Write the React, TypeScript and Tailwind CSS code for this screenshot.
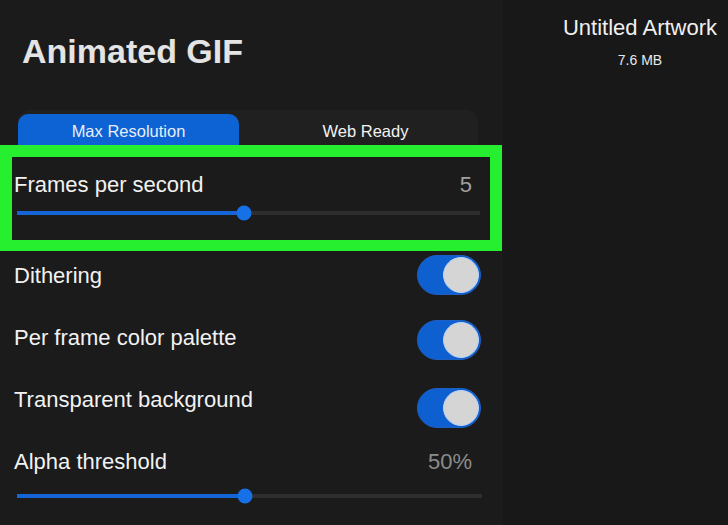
import React, { useState } from "react";

const font = { fontFamily: '"Liberation Sans", Arial, sans-serif' };

function Toggle({ on, onChange, className }: { on: boolean; onChange: () => void; className?: string }) {
    return (
        <button
            onClick={onChange}
            className={`flex h-[40px] w-[64px] items-center rounded-full border border-[#1d5fc4] px-[1px] ${on ? "justify-end bg-[#0e5fd0]" : "justify-start bg-[#3a3a3a]"} ${className ?? ""}`}
        >
            <span className="h-[36px] w-[36px] rounded-full border border-[#b9d3fb] bg-[#d5d5d5]" />
        </button>
    );
}

function Slider({ value, className }: { value: number; className?: string }) {
    return (
        <div className={`relative h-[4px] bg-[#2e2e2e] ${className ?? ""}`}>
            <div className="h-full bg-[#1565d6]" style={{ width: `${value}%` }} />
            <div
                className="absolute top-1/2 h-[15px] w-[15px] -translate-x-1/2 -translate-y-1/2 rounded-full bg-[#1670e6]"
                style={{ left: `${value}%` }}
            />
        </div>
    );
}

export default function App() {
    const [tab, setTab] = useState("max");
    const [dither, setDither] = useState(true);
    const [palette, setPalette] = useState(true);
    const [transparent, setTransparent] = useState(true);

    return (
        <div className="flex h-[525px] w-[728px] overflow-hidden bg-[#1a1a1a] text-[#f2f2f2]" style={font}>
            <div className="flex w-[503px] flex-col bg-[#1b1b1b]">
                <div className="h-[110px] pl-[22px] pt-[31px]">
                    <h1 className="text-[34px] font-bold leading-[40px] text-[#e4e4e4]">Animated GIF</h1>
                </div>

                <div className="ml-[18px] flex h-[35px] w-[460px] rounded-t-[12px] bg-[#202020]">
                    <button
                        onClick={() => setTab("max")}
                        className={`mt-[4px] flex w-[221px] items-center justify-center rounded-t-[10px] pt-[3px] text-[16.5px] ${tab === "max" ? "bg-[#0d63d3] text-[#e8eef8]" : "text-[#f0f0f0]"}`}
                    >
                        Max Resolution
                    </button>
                    <button
                        onClick={() => setTab("web")}
                        className={`mt-[4px] flex flex-1 items-center justify-center rounded-t-[10px] pl-[14px] pt-[3px] text-[16.5px] ${tab === "web" ? "bg-[#0d63d3]" : ""}`}
                    >
                        Web Ready
                    </button>
                </div>

                <div className="relative z-10 h-[106px] w-[502px] border-[12px] border-b-[11px] border-[#26ef2f] bg-[#1b1b1b] pt-[16px]">
                    <div className="flex items-center justify-between pl-[2px] pr-[18px] text-[22px] leading-[24px]">
                        <span>Frames per second</span>
                        <span className="text-[#a0a0a0]">5</span>
                    </div>
                    <Slider value={49} className="ml-[5px] mr-[10px] mt-[14px]" />
                </div>

                <div className="-mt-[6px] flex flex-col pl-[14px] pr-[22px] text-[22px] leading-[24px]">
                    <div className="flex h-[62px] items-center justify-between">
                        <span>Dithering</span>
                        <Toggle on={dither} onChange={() => setDither(!dither)} className="-mt-[2px]" />
                    </div>
                    <div className="flex h-[62px] items-center justify-between">
                        <span>Per frame color palette</span>
                        <Toggle on={palette} onChange={() => setPalette(!palette)} className="mt-[4px]" />
                    </div>
                    <div className="flex h-[62px] items-center justify-between">
                        <span>Transparent background</span>
                        <Toggle on={transparent} onChange={() => setTransparent(!transparent)} className="mt-[16px]" />
                    </div>
                    <div className="flex h-[62px] items-center justify-between pr-[9px]">
                        <span>Alpha threshold</span>
                        <span className="text-[#8c8c8c]">50%</span>
                    </div>
                    <Slider value={49} className="-mr-[1px] ml-[3px] mt-[1px]" />
                </div>
            </div>

            <div className="flex flex-1 flex-col bg-[#181818]">
                <div className="ml-[59px] flex w-[156px] flex-col items-center pt-[15px]">
                    <span className="text-[22px] leading-[26px] text-[#f0f0f0]">Untitled Artwork</span>
                    <span className="mt-[11px] text-[14px] leading-[17px] text-[#e8e8e8]">7.6 MB</span>
                </div>
            </div>
        </div>
    );
}
